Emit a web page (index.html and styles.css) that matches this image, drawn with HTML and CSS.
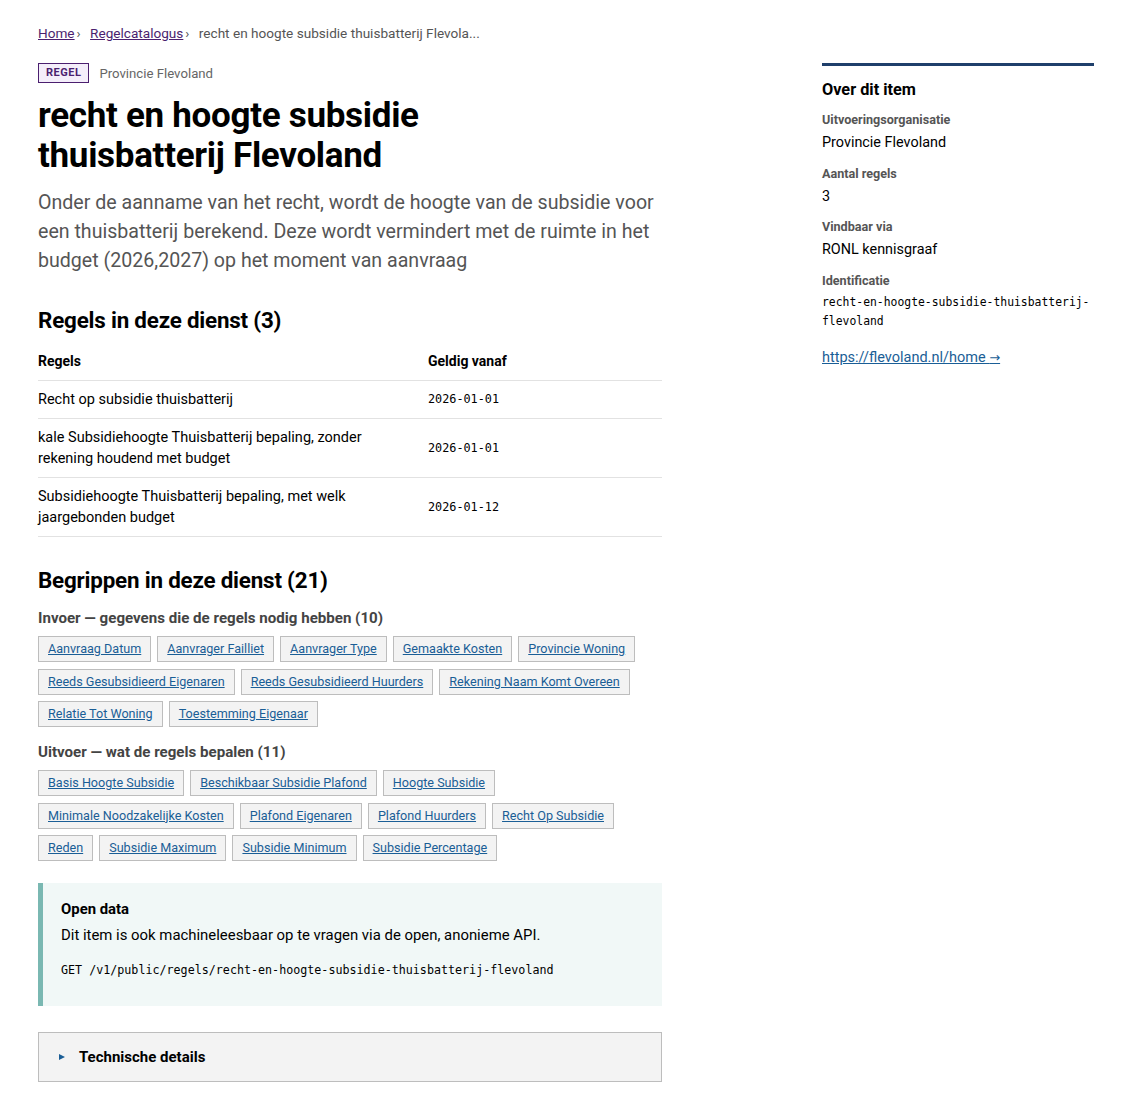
FILE: index.html
```html
<!DOCTYPE html>
<html lang="nl">
<head>
<meta charset="utf-8">
<title>recht en hoogte subsidie thuisbatterij Flevoland</title>
<link rel="stylesheet" href="styles.css">
</head>
<body>
<div class="page">
  <main class="main">
    <nav class="crumbs">
      <a href="#">Home</a><span class="sep">›</span>
      <a href="#">Regelcatalogus</a><span class="sep">›</span>
      <span class="current">recht en hoogte subsidie thuisbatterij Flevola...</span>
    </nav>
    <div class="meta">
      <span class="badge">REGEL</span>
      <span class="org">Provincie Flevoland</span>
    </div>
    <h1 class="title">recht en hoogte subsidie thuisbatterij Flevoland</h1>
    <p class="lead">Onder de aanname van het recht, wordt de hoogte van de subsidie voor een thuisbatterij berekend. Deze wordt vermindert met de ruimte in het budget (2026,2027) op het moment van aanvraag</p>

    <h2 class="section-title">Regels in deze dienst (3)</h2>
    <table class="rules">
      <thead>
        <tr><th class="col-name">Regels</th><th>Geldig vanaf</th></tr>
      </thead>
      <tbody>
        <tr><td>Recht op subsidie thuisbatterij</td><td class="date">2026-01-01</td></tr>
        <tr><td>kale Subsidiehoogte Thuisbatterij bepaling, zonder rekening houdend met budget</td><td class="date">2026-01-01</td></tr>
        <tr><td>Subsidiehoogte Thuisbatterij bepaling, met welk jaargebonden budget</td><td class="date">2026-01-12</td></tr>
      </tbody>
    </table>

    <h2 class="section-title concepts">Begrippen in deze dienst (21)</h2>
    <h3 class="sub">Invoer — gegevens die de regels nodig hebben (10)</h3>
    <ul class="chips">
      <li><a href="#">Aanvraag Datum</a></li>
      <li><a href="#">Aanvrager Failliet</a></li>
      <li><a href="#">Aanvrager Type</a></li>
      <li><a href="#">Gemaakte Kosten</a></li>
      <li><a href="#">Provincie Woning</a></li>
      <li><a href="#">Reeds Gesubsidieerd Eigenaren</a></li>
      <li><a href="#">Reeds Gesubsidieerd Huurders</a></li>
      <li><a href="#">Rekening Naam Komt Overeen</a></li>
      <li><a href="#">Relatie Tot Woning</a></li>
      <li><a href="#">Toestemming Eigenaar</a></li>
    </ul>
    <h3 class="sub">Uitvoer — wat de regels bepalen (11)</h3>
    <ul class="chips">
      <li><a href="#">Basis Hoogte Subsidie</a></li>
      <li><a href="#">Beschikbaar Subsidie Plafond</a></li>
      <li><a href="#">Hoogte Subsidie</a></li>
      <li><a href="#">Minimale Noodzakelijke Kosten</a></li>
      <li><a href="#">Plafond Eigenaren</a></li>
      <li><a href="#">Plafond Huurders</a></li>
      <li><a href="#">Recht Op Subsidie</a></li>
      <li><a href="#">Reden</a></li>
      <li><a href="#">Subsidie Maximum</a></li>
      <li><a href="#">Subsidie Minimum</a></li>
      <li><a href="#">Subsidie Percentage</a></li>
    </ul>

    <section class="opendata">
      <h4 class="od-title">Open data</h4>
      <p class="od-text">Dit item is ook machineleesbaar op te vragen via de open, anonieme API.</p>
      <code class="od-code">GET /v1/public/regels/recht-en-hoogte-subsidie-thuisbatterij-flevoland</code>
    </section>

    <details class="tech">
      <summary>Technische details</summary>
    </details>
  </main>

  <aside class="side">
    <h2 class="side-title">Over dit item</h2>
    <dl class="facts">
      <dt>Uitvoeringsorganisatie</dt>
      <dd>Provincie Flevoland</dd>
      <dt>Aantal regels</dt>
      <dd>3</dd>
      <dt>Vindbaar via</dt>
      <dd>RONL kennisgraaf</dd>
      <dt>Identificatie</dt>
      <dd class="mono">recht-en-hoogte-subsidie-thuisbatterij-flevoland</dd>
    </dl>
    <a class="ext" href="#">https://flevoland.nl/home <span class="arrow">→</span></a>
  </aside>
</div>
</body>
</html>
```

FILE: styles.css
```css
* { box-sizing: border-box; }
html, body { margin: 0; padding: 0; background: #fff; }
body {
  font-family: Roboto, "Noto Sans", sans-serif;
  color: #000;
  font-size: 14px;
}
.page {
  display: grid;
  grid-template-columns: 624px 272px;
  column-gap: 160px;
  padding: 22px 38px 24px 38px;
}
a { color: #1a5e96; }

.crumbs { font-size: 13.6px; line-height: 22px; color: #555; }
.crumbs a { color: #4b1f6f; text-decoration: underline; }
.crumbs .sep { margin: 0 6px 0 2px; color: #555; }
.crumbs .current { color: #555; }

.meta { display: flex; align-items: center; gap: 10px; margin-top: 19px; }
.badge {
  display: inline-block;
  border: 1px solid #4b1f6f;
  background: #f4eefa;
  color: #4b1f6f;
  font-weight: 700;
  font-size: 11px;
  letter-spacing: 0.5px;
  line-height: 18px;
  padding: 0 7px;
}
.org { color: #666; font-size: 13.2px; }

.title {
  font-size: 35px;
  line-height: 40px;
  font-weight: 700;
  margin: 13px 0 0 0;
  letter-spacing: -0.3px;
  max-width: 520px;
}
.lead {
  font-size: 19.6px;
  line-height: 29px;
  color: #555;
  margin: 12px 0 0 0;
}

.section-title {
  font-size: 22.4px;
  line-height: 28px;
  font-weight: 700;
  margin: 31px 0 0 0;
  letter-spacing: -0.2px;
}
.section-title.concepts { margin-top: 29px; }

.rules {
  width: 100%;
  border-collapse: collapse;
  margin-top: 11px;
  font-size: 14.5px;
}
.rules th {
  text-align: left;
  font-weight: 700;
  font-size: 14px;
  padding: 8px 0 11px 0;
  border-bottom: 1px solid #e2e2e2;
}
.rules th.col-name { width: 390px; }
.rules td {
  padding: 8px 20px 8px 0;
  line-height: 21px;
  border-bottom: 1px solid #e2e2e2;
  vertical-align: middle;
}
.rules td.date {
  font-family: "DejaVu Sans Mono", monospace;
  font-size: 11.8px;
  padding-right: 0;
}

.sub {
  font-size: 15.1px;
  line-height: 20px;
  font-weight: 700;
  color: #444;
  margin: 14px 0 0 0;
}
.chips {
  list-style: none;
  margin: 8px 0 0 0;
  padding: 0;
  display: flex;
  flex-wrap: wrap;
  gap: 6.5px 6px;
}
.chips li {
  border: 1px solid #bdbdbd;
  background: #f3f3f3;
  padding: 0 9px;
  line-height: 24px;
  font-size: 12.6px;
}
.chips a { color: #1a5e96; text-decoration: underline; }
.chips + .sub { margin-top: 15px; }

.opendata {
  margin-top: 22px;
  background: #f1f8f7;
  border-left: 5px solid #7ab8b2;
  padding: 17px 18px 28px 18px;
}
.od-title { font-size: 14.9px; font-weight: 700; margin: 0; line-height: 18px; }
.od-text { font-size: 14.9px; margin: 7px 0 0 0; line-height: 20px; }
.od-code {
  display: block;
  font-family: "DejaVu Sans Mono", monospace;
  font-size: 11.7px;
  margin-top: 17px;
  line-height: 16px;
}

.tech {
  margin-top: 26px;
  border: 1px solid #bdbdbd;
  background: #f3f3f3;
}
.tech summary {
  padding: 14px 20px;
  font-size: 15px;
  font-weight: 700;
  line-height: 20px;
  cursor: pointer;
  list-style: none;
  display: flex;
  align-items: center;
}
.tech summary::-webkit-details-marker { display: none; }
.tech summary::before {
  content: "";
  width: 0; height: 0;
  border-left: 6px solid #1a5e96;
  border-top: 3.5px solid transparent;
  border-bottom: 3.5px solid transparent;
  margin-right: 14px;
}

.side { padding-top: 41px; }
.side-title {
  border-top: 3px solid #1f3f6b;
  margin: 0;
  padding-top: 14px;
  font-size: 16.3px;
  line-height: 20px;
  font-weight: 700;
}
.facts { margin: 12px 0 0 0; }
.facts dt {
  font-size: 12.6px;
  font-weight: 700;
  color: #555;
  line-height: 16px;
  margin-top: 13.5px;
}
.facts dt:first-child { margin-top: 0; }
.facts dd {
  margin: 6px 0 0 0;
  font-size: 14.4px;
  line-height: 18px;
}
.facts dd.mono {
  font-family: "DejaVu Sans Mono", monospace;
  font-size: 11.4px;
  line-height: 19px;
  margin-top: 4px;
}
.ext { display: inline-block; margin-top: 18px; font-size: 14.5px; color: #1a5e96; }
.ext .arrow { font-family: "DejaVu Sans", sans-serif; font-size: 13px; }
```
